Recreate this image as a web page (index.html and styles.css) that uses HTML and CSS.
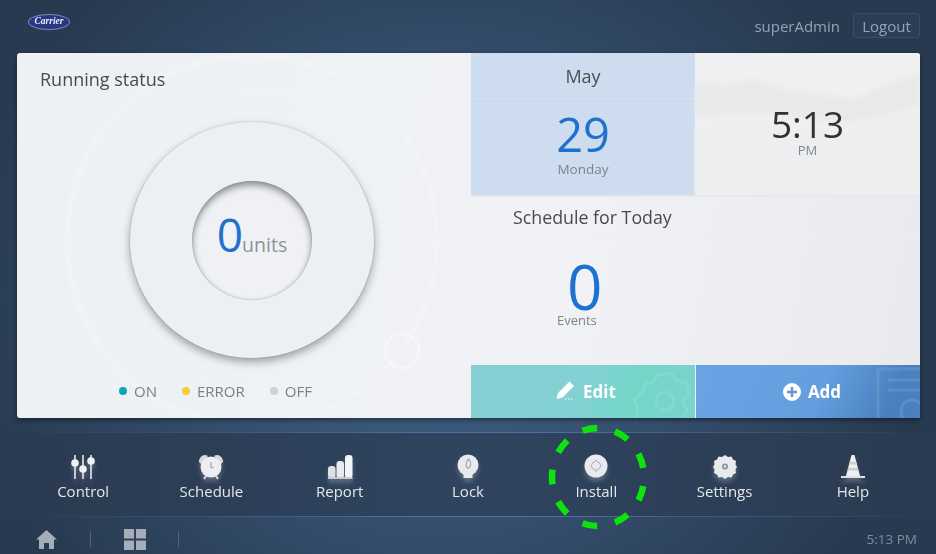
FILE: index.html
```html
<!DOCTYPE html>
<html lang="en">
<head>
    <meta charset="UTF-8">
    <meta name="viewport" content="width=device-width, initial-scale=1.0">
    <title>Carrier Touch Controller</title>
    <link rel="stylesheet" href="styles.css">
</head>
<body>
    <div class="page">
        <header class="topbar">
            <div class="logo"><span>Carrier</span></div>
            <div class="user">
                <span class="user-name">superAdmin</span>
                <button class="logout">Logout</button>
            </div>
        </header>

        <main class="card">
            <section class="status">
                <svg class="status-deco" viewBox="0 0 454 365">
                    <g fill="none" stroke="#fff">
                        <circle cx="235" cy="187" r="150" stroke-opacity="0.15"/>
                        <circle cx="235" cy="187" r="185" stroke-width="6" stroke-opacity="0.15"/>
                        <circle cx="385" cy="298" r="17" stroke-width="3" stroke-opacity="0.35"/>
                    </g>
                </svg>
                <h2 class="status-title">Running status</h2>
                <div class="ring">
                    <div class="ring-hole">
                        <span class="ring-num">0</span><span class="ring-unit">units</span>
                    </div>
                </div>
                <ul class="legend">
                    <li><i class="dot dot-on"></i>ON</li>
                    <li><i class="dot dot-error"></i>ERROR</li>
                    <li><i class="dot dot-off"></i>OFF</li>
                </ul>
            </section>

            <section class="side">
                <div class="date-row">
                    <div class="date">
                        <div class="date-month">May</div>
                        <div class="date-day">29</div>
                        <div class="date-week">Monday</div>
                    </div>
                    <div class="clock">
                        <svg class="clock-hills" viewBox="0 0 224 142" preserveAspectRatio="none">
                            <path d="M0 30L30 32L60 26L95 38L130 42L160 46L195 30L224 20V60L190 62L150 70L110 66L70 60L30 62L0 64Z" fill="#e8e9eb"/>
                            <path d="M0 72L60 66L120 76L170 68L224 50V142H0Z" fill="#edeef0"/>
                        </svg>
                        <div class="clock-time">5:13</div>
                        <div class="clock-ampm">PM</div>
                    </div>
                </div>
                <div class="schedule">
                    <h2 class="schedule-title">Schedule for Today</h2>
                    <div class="schedule-num">0</div>
                    <div class="schedule-label">Events</div>
                </div>
                <div class="actions">
                    <button class="action action-edit">
                        <svg class="action-deco" width="70" height="53" viewBox="0 0 70 53">
                            <g fill="none" stroke="#fff" stroke-opacity="0.1" stroke-width="3">
                                <circle cx="40" cy="36" r="9"/>
                                <path d="M20 18l8 0 4-8 14-2 6 8 10 2 2 12-6 6 4 10-6 9M20 18l-3 10-8 6 4 12-2 7"/>
                            </g>
                        </svg>
                        <svg width="22" height="24" viewBox="0 0 22 24">
                            <path d="M15.500 1.500l4.500 4.500-11.500 11.500-6 1.500 1.500-6z" fill="#fff"/>
                            <path d="M11 19h1.400M14 19h1.400M17 19h1.400" stroke="#fff" stroke-width="1"/>
                        </svg>
                        <span>Edit</span>
                    </button>
                    <button class="action action-add">
                        <svg class="action-deco" width="44" height="53" viewBox="0 0 44 53">
                            <g fill="none" stroke="#fff" stroke-opacity="0.1" stroke-width="3">
                                <path d="M2 53V4h42"/>
                                <path d="M12 15H44M12 25H44"/>
                                <circle cx="36" cy="46" r="11"/>
                            </g>
                        </svg>
                        <svg width="18" height="18" viewBox="0 0 18 18">
                            <circle cx="9" cy="9" r="9" fill="#fff"/>
                            <path d="M9 4v10M4 9h10" stroke="#5f97d8" stroke-width="2.400"/>
                        </svg>
                        <span>Add</span>
                    </button>
                </div>
            </section>
        </main>

        <nav class="menu">
            <a class="menu-item">
                <svg width="26" height="26" viewBox="0 0 26 26">
                    <path d="M5 1v24M13 1v24M21 1v24" stroke="#e6e8eb" stroke-width="1.600"/>
                    <circle cx="5" cy="9" r="3.800" fill="#f1f2f4"/>
                    <circle cx="13" cy="15" r="3.800" fill="#f1f2f4"/>
                    <circle cx="21" cy="7" r="3.800" fill="#f1f2f4"/>
                </svg>
                <span>Control</span>
            </a>
            <a class="menu-item">
                <svg width="26" height="26" viewBox="0 0 26 26">
                    <path d="M1 8a6 6 0 0 1 9-6l-7 8zM25 8a6 6 0 0 0-9-6l7 8z" fill="#d6d9dd"/>
                    <circle cx="13" cy="13" r="10.500" fill="#eceef0"/>
                    <path d="M13 8v5.500h2.500" fill="none" stroke="#a5acb6" stroke-width="1.300"/>
                    <path d="M6 25l2-3M20 25l-2-3" stroke="#dfe1e4" stroke-width="2"/>
                </svg>
                <span>Schedule</span>
            </a>
            <a class="menu-item">
                <svg width="26" height="26" viewBox="0 0 26 26">
                    <rect x="1" y="12" width="7.500" height="12" rx="3" fill="#dfe2e5"/>
                    <rect x="9.500" y="7" width="7.500" height="17" rx="3" fill="#e9ebee"/>
                    <rect x="18" y="1" width="7.500" height="23" rx="3" fill="#f3f4f5"/>
                    <rect x="1" y="23" width="24.500" height="2" fill="#c9ccd1"/>
                </svg>
                <span>Report</span>
            </a>
            <a class="menu-item">
                <svg width="26" height="26" viewBox="0 0 26 26">
                    <circle cx="13" cy="11" r="10.500" fill="#e8eaed"/>
                    <path d="M8.500 18h9v6h-9z" fill="#e8eaed"/>
                    <path d="M13.500 5c3 3 3 7 0 9.500c-3-1-3.500-6 0-9.500z" fill="none" stroke="#a5acb6" stroke-width="1.200"/>
                </svg>
                <span>Lock</span>
            </a>
            <a class="menu-item">
                <svg width="26" height="26" viewBox="0 0 26 26">
                    <circle cx="13" cy="12" r="11.500" fill="#e8eaed"/>
                    <path d="M13 6l2 2.500h1.500l1.500 3.500-2 3h-1.500l-1.500 2.500-1.500-2.500h-1.500l-2-3 2-3.500h1.500z" fill="none" stroke="#a9b0b9" stroke-width="1"/>
                </svg>
                <span>Install</span>
            </a>
            <a class="menu-item">
                <svg width="26" height="26" viewBox="0 0 26 26">
                    <path d="M13 1l3 2 3.500-.5 1.500 3 3 1.500-.5 3.500 1.500 2.500-1.500 2.500.5 3.500-3 1.500-1.500 3-3.500-.5-3 2-3-2-3.500.5-1.500-3-3-1.500.5-3.500-1.500-2.500 1.500-2.500-.5-3.500 3-1.500 1.500-3 3.500.5z" fill="#e8eaed"/>
                    <circle cx="13" cy="12.500" r="3" fill="#8a93a0"/>
                    <circle cx="13" cy="12.500" r="1.300" fill="#e8eaed"/>
                </svg>
                <span>Settings</span>
            </a>
            <a class="menu-item">
                <svg width="26" height="26" viewBox="0 0 26 26">
                    <path d="M11.500 1h3L20 22H6z" fill="#eceef0"/>
                    <path d="M9.800 8h6.400l.6 2.500H9.200zM8.200 14h9.600l.6 2.500H7.600z" fill="#c9cdd2"/>
                    <path d="M1 22h24v2H1z" fill="#dfe1e4"/>
                </svg>
                <span>Help</span>
            </a>
        </nav>

        <footer class="bottombar">
            <svg class="home-icon" width="21" height="19" viewBox="0 0 21 19">
                <path d="M10.500 0L21 9.500h-3V19h-5v-6H8v6H3V9.500H0z" fill="#a5adb9"/>
            </svg>
            <i class="sep sep-home"></i>
            <svg class="grid-icon" width="22" height="21" viewBox="0 0 22 21">
                <path d="M0 0h10v9.500H0zM12 0h10v9.500H12zM0 11.500h10V21H0zM12 11.500h10V21H12z" fill="#a5adb9"/>
            </svg>
            <i class="sep"></i>
            <span class="bottom-time">5:13 PM</span>
        </footer>

        <svg class="highlight" width="936" height="554" viewBox="0 0 936 554">
            <ellipse cx="598" cy="477" rx="46" ry="49" pathLength="360" fill="none" stroke="#0ce40c" stroke-width="6.500" stroke-dasharray="18 22" stroke-dashoffset="-11"/>
        </svg>
    </div>
</body>
</html>
```

FILE: styles.css
```css
* {
    box-sizing: border-box;
}
body {
    margin: 0;
    font-family: "Open Sans", "Noto Sans", Arial, sans-serif;
    background-color: #2d3f56;
}
h2 {
    margin: 0;
    font-weight: 400;
}
.page {
    position: relative;
    width: 936px;
    height: 554px;
    overflow: hidden;
    display: flex;
    flex-direction: column;
    filter: blur(0.4px);
    background: radial-gradient(ellipse 480px 420px at 440px 300px, #456389 0%, #35506f 50%, #283a50 100%);
}

/* top bar */
.topbar {
    height: 53px;
    padding: 14px 16px 0 28px;
    display: flex;
    justify-content: space-between;
    align-items: flex-start;
}
.logo {
    width: 42px;
    height: 16px;
    border-radius: 50%;
    background: #2b3585;
    border: 1px solid #7f87b8;
    display: flex;
    align-items: center;
    justify-content: center;
}
.logo span {
    color: #e8eaf4;
    font-family: "Liberation Serif", serif;
    font-style: italic;
    font-weight: 700;
    font-size: 9.5px;
    line-height: 1;
}
.user {
    display: flex;
    align-items: center;
    gap: 13px;
    margin-top: -1px;
}
.user-name {
    color: #97a3b3;
    font-size: 15px;
}
.logout {
    width: 67px;
    height: 25px;
    padding: 0;
    color: #97a3b3;
    font-family: inherit;
    font-size: 15px;
    background: #2c3e55;
    border: 1px solid #3a4e67;
    border-radius: 3px;
}

/* main card */
.card {
    height: 365px;
    margin: 0 16px 0 17px;
    display: flex;
    border-radius: 3px;
    overflow: hidden;
    background: linear-gradient(100deg, #eef1f3 0%, #f0f2f5 60%, #e9eaed 100%);
    box-shadow: 0 2px 5px rgba(0, 0, 0, 0.45);
}
.status {
    position: relative;
    width: 454px;
    flex: none;
    padding: 15px 23px 0;
    display: flex;
    flex-direction: column;
}
.status-deco {
    position: absolute;
    left: 0;
    top: 0;
    width: 454px;
    height: 365px;
}
.status-title {
    position: relative;
    height: 23px;
    color: #4a4a4a;
    font-size: 18px;
    line-height: 23px;
}
.ring {
    position: relative;
    width: 244px;
    height: 236px;
    margin: 31px 0 0 90px;
    border-radius: 50%;
    display: flex;
    align-items: center;
    justify-content: center;
    background: #edf0f3;
    box-shadow: 0 4px 8px rgba(0, 0, 0, 0.35), 0 0 2px rgba(0, 0, 0, 0.2);
}
.ring-hole {
    width: 120px;
    height: 119px;
    border-radius: 50%;
    display: flex;
    align-items: baseline;
    justify-content: center;
    padding-top: 23px;
    background: #eff1f4;
    box-shadow: inset 0 4px 7px rgba(0, 0, 0, 0.42), inset 0 0 2px rgba(0, 0, 0, 0.25);
}
.ring-num {
    color: #1f71cf;
    font-size: 46px;
    line-height: 60px;
    letter-spacing: -1px;
}
.ring-unit {
    color: #8e9297;
    font-size: 19.5px;
}
.legend {
    position: relative;
    list-style: none;
    margin: 23px 0 0 79px;
    padding: 0;
    display: flex;
    gap: 25px;
    color: #7c7f83;
    font-size: 15px;
    line-height: 20px;
}
.legend li {
    display: flex;
    align-items: center;
    gap: 7px;
}
.dot {
    width: 8px;
    height: 8px;
    border-radius: 50%;
}
.dot-on {
    background: #10a6ad;
}
.dot-error {
    background: #f3cf33;
}
.dot-off {
    background: #cfd0d2;
}

/* right side */
.side {
    flex: 1;
    display: flex;
    flex-direction: column;
}
.date-row {
    height: 144px;
    display: flex;
    border-bottom: 2px solid #e6e8ea;
}
.date {
    width: 224px;
    text-align: center;
    background: #cddcee;
}
.date-month {
    height: 46px;
    padding-top: 11px;
    color: #4b4f54;
    font-size: 18px;
    line-height: 24px;
    border-bottom: 1px solid #d8e3f0;
}
.date-day {
    margin-top: 10px;
    color: #1f71cf;
    font-size: 47px;
    line-height: 50px;
}
.date-week {
    color: #7f8389;
    font-size: 13.5px;
    line-height: 20px;
}
.clock {
    position: relative;
    flex: 1;
    padding-top: 51px;
    text-align: center;
    background: #eff0f2;
}
.clock-hills {
    position: absolute;
    left: 0;
    top: 0;
    width: 100%;
    height: 100%;
    filter: blur(2px);
}
.clock-time {
    position: relative;
    color: #333;
    font-size: 37px;
    line-height: 40px;
}
.clock-ampm {
    position: relative;
    color: #85888c;
    font-size: 13px;
    line-height: 12px;
}
.schedule {
    flex: 1;
    display: flex;
    flex-direction: column;
    align-items: flex-start;
}
.schedule-title {
    width: 100%;
    height: 40px;
    padding: 8px 0 0 42px;
    color: #4a4a4a;
    font-size: 17.8px;
    line-height: 24px;
    border-bottom: 1px solid #eceef0;
}
.schedule-num {
    margin: 21px 0 0 96px;
    color: #1f71cf;
    font-size: 62px;
    line-height: 56px;
}
.schedule-label {
    margin-left: 86px;
    color: #7f8389;
    font-size: 13px;
    line-height: 12px;
}
.actions {
    height: 53px;
    display: flex;
    gap: 1px;
}
.action {
    position: relative;
    padding: 0;
    border: none;
    overflow: hidden;
    display: flex;
    align-items: center;
    justify-content: center;
    gap: 7px;
    color: #fff;
    font-family: inherit;
    font-size: 17px;
    font-weight: 700;
}
.action span {
    position: relative;
}
.action-edit {
    width: 224px;
    padding-left: 4px;
    background: linear-gradient(115deg, #84d0d4 0%, #82d1d3 50%, #75d6c8 70%, #7ad4cc 100%);
}
.action-add {
    width: 224px;
    padding-left: 8px;
    background: linear-gradient(115deg, #6aa4e4 0%, #659edf 55%, #4a80bf 85%, #4a80c0 100%);
}
.action-deco {
    position: absolute;
    right: 0;
    top: 0;
}

/* bottom menu */
.menu {
    height: 85px;
    margin-top: 14px;
    padding: 0 19px;
    display: grid;
    grid-template-columns: repeat(7, 1fr);
    background: linear-gradient(90deg, #2a3a50 0%, #30445f 50%, #2a3a50 100%);
    border-top: 1px solid #4a6a98;
    border-bottom: 1px solid #3f5a80;
    border-image: linear-gradient(90deg, #2a3a50 0%, #4f70a0 45%, #4f70a0 60%, #2a3a50 100%) 1;
}
.menu-item {
    display: flex;
    flex-direction: column;
    align-items: center;
    padding-top: 21px;
    color: #e4e7ea;
    font-size: 15px;
}
.menu-item svg {
    margin-bottom: 1px;
    filter: drop-shadow(0 4px 2px rgba(255, 255, 255, 0.22));
}
.menu-item span {
    line-height: 20px;
}
.bottombar {
    flex: 1;
    padding: 7px 19px 0 36px;
    display: flex;
    align-items: center;
}
.grid-icon {
    margin-left: 33px;
    margin-right: 32px;
}
.sep {
    width: 1px;
    height: 16px;
    background: #51657f;
}
.sep-home {
    margin-left: 33px;
}
.bottom-time {
    margin-left: auto;
    color: #7f8da1;
    font-size: 13.5px;
}

/* annotation drawn over the screen */
.highlight {
    position: absolute;
    left: 0;
    top: 0;
    pointer-events: none;
}
```
